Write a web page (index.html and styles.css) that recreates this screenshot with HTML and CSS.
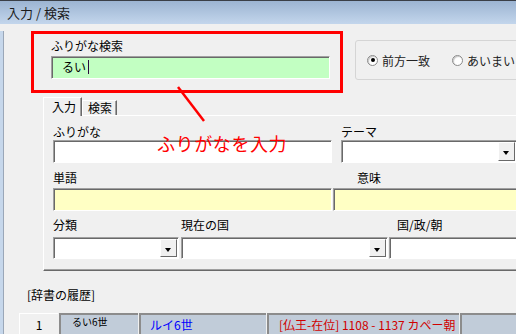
FILE: index.html
```html
<!DOCTYPE html>
<html lang="ja">
<head>
  <meta charset="UTF-8">
  <title>入力 / 検索</title>
  <link rel="stylesheet" href="styles.css">
</head>
<body>

<div class="window">
  <div class="titlebar">入力 / 検索</div>

  <div class="client">
    <div class="search-row">
      <div class="search-box">
        <div class="label">ふりがな検索</div>
        <div class="box box-green search-input">るい<span class="caret"></span></div>
      </div>
      <div class="match-group">
        <span class="radio checked"></span><span class="radio-text">前方一致</span>
        <span class="radio second"></span><span class="radio-text">あいまい</span>
      </div>
    </div>

    <div class="tabs">
      <div class="tab-strip">
        <div class="tab active">入力</div>
        <div class="tab">検索</div>
      </div>
      <div class="tab-panel">
        <div class="row row1">
          <div class="field w-furigana">
            <div class="label">ふりがな</div>
            <div class="box"></div>
          </div>
          <div class="field w-theme">
            <div class="label">テーマ</div>
            <div class="box combo"><span class="drop"></span></div>
          </div>
        </div>
        <div class="row row2">
          <div class="field w-word">
            <div class="label">単語</div>
            <div class="box box-yellow"></div>
          </div>
          <div class="field w-meaning">
            <div class="label indent24">意味</div>
            <div class="box box-yellow"></div>
          </div>
        </div>
        <div class="row row3">
          <div class="field w-kind">
            <div class="label">分類</div>
            <div class="box combo"><span class="drop"></span></div>
          </div>
          <div class="field w-country">
            <div class="label">現在の国</div>
            <div class="box combo"><span class="drop"></span></div>
          </div>
          <div class="field w-dynasty">
            <div class="label indent8">国/政/朝</div>
            <div class="box"></div>
          </div>
        </div>
      </div>
    </div>

    <div class="history-title">[辞書の履歴]</div>
    <div class="history-row">
      <div class="cell cell-no">1</div>
      <div class="cell cell-kana">るい6世</div>
      <div class="cell cell-word">ルイ6世</div>
      <div class="cell cell-note">[仏王-在位] 1108 - 1137 カペー朝</div>
      <div class="cell cell-rest"></div>
    </div>

    <!-- 注釈 -->
    <svg class="note-line" width="40" height="44" viewBox="0 0 40 44">
      <line x1="3" y1="1" x2="29" y2="35" stroke="#ff0000" stroke-width="2.5"/>
    </svg>
    <div class="note-text">ふりがなを入力</div>
  </div>
</div>

</body>
</html>
```

FILE: styles.css
```css
/* ページ全体 */
body {
  margin: 0;
  font-family: "Noto Sans CJK JP", "DejaVu Sans", sans-serif;
  font-size: 12px;
  color: #000;
  background: #f0f0f0;
  overflow: hidden;
}

.window {
  width: 516px;
  height: 334px;
  overflow: hidden;
}

/* タイトルバー */
.titlebar {
  height: 23px;
  line-height: 23px;
  border-top: 1px solid #3a3f47;
  padding-left: 7px;
  font-size: 13px;
  color: #1b1b1b;
  background: linear-gradient(#9cb4d2, #c3d6ec);
}

.client {
  position: relative;
  height: 310px;
  border-left: 3px solid #c6d7eb;
  box-shadow: inset 1px 0 0 #9aa7b8;
  background: #f0f0f0;
}

.label {
  height: 14px;
  line-height: 14px;
  white-space: nowrap;
}

.indent24 { padding-left: 24px; }
.indent8 { padding-left: 8px; }

/* 入力欄 */
.box {
  position: relative;
  height: 23px;
  box-sizing: border-box;
  border: 1px solid;
  border-color: #a0a0a0 #ffffff #ffffff #a0a0a0;
  box-shadow: inset 1px 1px 0 #696969;
  background: #fff;
}

.box-green { background: #c2ffc2; }
.box-yellow { background: #ffffc4; }

.combo .drop {
  position: absolute;
  right: 1px;
  top: 1px;
  bottom: 1px;
  width: 17px;
  box-sizing: border-box;
  border: 1px solid;
  border-color: #ffffff #696969 #696969 #ffffff;
  background: #f0f0f0;
}

.combo .drop::after {
  content: "";
  position: absolute;
  left: 4px;
  top: 8px;
  border-left: 3.5px solid transparent;
  border-right: 3.5px solid transparent;
  border-top: 4px solid #000;
}

/* ふりがな検索 */
.search-row {
  display: flex;
  align-items: flex-start;
  margin-top: 7px;
  padding-left: 28px;
}

.search-box {
  flex-shrink: 0;
  width: 312px;
  height: 62px;
  box-sizing: border-box;
  border: 3px solid #ff0000;
  padding: 5px 0 0 17px;
}

.search-input {
  width: 279px;
  margin-top: 3px;
  padding-left: 10px;
  line-height: 20px;
}

.caret {
  display: inline-block;
  width: 1px;
  height: 14px;
  margin-left: 2px;
  vertical-align: -2px;
  background: #2a0a40;
}

.match-group {
  display: flex;
  align-items: center;
  flex-shrink: 0;
  width: 200px;
  height: 40px;
  margin: 9px 0 0 12px;
  padding-left: 11px;
  box-sizing: border-box;
  border: 1px solid #d5d5d5;
  border-radius: 3px;
}

.radio {
  position: relative;
  flex-shrink: 0;
  width: 11px;
  height: 11px;
  box-sizing: border-box;
  border: 1px solid #8a8a8a;
  border-radius: 50%;
  background: #fff;
  box-shadow: inset 1px 1px 1px #c8c8c8;
}

.radio.checked::after {
  content: "";
  position: absolute;
  left: 2.5px;
  top: 2.5px;
  width: 4px;
  height: 4px;
  border-radius: 50%;
  background: #000;
}

.radio.second { margin-left: 22px; }

.radio-text {
  flex-shrink: 0;
  margin-left: 4px;
  color: #222;
  white-space: nowrap;
}

/* タブ */
.tabs {
  margin: 4px 0 0 40px;
}

.tab-strip {
  display: flex;
  align-items: flex-end;
  height: 18px;
}

.tab {
  height: 15px;
  line-height: 14px;
  padding: 0 4px 0 5px;
  box-sizing: border-box;
  border: 1px solid;
  border-bottom: none;
  border-color: #ffffff #696969 #696969 #ffffff;
  box-shadow: inset -1px 0 0 #a0a0a0;
}

.tab.active {
  position: relative;
  z-index: 1;
  width: 39px;
  height: 19px;
  margin-bottom: -1px;
  padding: 2px 0 0 8px;
  background: #f0f0f0;
}

.tab-panel {
  width: 480px;
  height: 156px;
  box-sizing: border-box;
  border-top: 1px solid #fff;
  border-left: 1px solid #fff;
  border-bottom: 1px solid #696969;
  box-shadow: inset 0 -1px 0 #a0a0a0;
  padding: 9px 0 0 9px;
}

.row {
  display: flex;
}

.field {
  flex-shrink: 0;
}

.row1 .label { margin-bottom: 1px; }
.row1 { gap: 9px; }

.row2 { gap: 1px; margin-top: 8px; }
.row2 .label { margin-bottom: 3px; }

.row3 { gap: 1px; margin-top: 7px; }
.row3 .label { margin-bottom: 5px; }
.row3 .box { height: 22px; }
.w-kind { margin-right: 1px; }

.w-furigana, .w-word { width: 279px; }
.w-theme { width: 176px; }
.w-meaning { width: 200px; }
.w-kind { width: 126px; }
.w-country { width: 207px; }
.w-dynasty { width: 150px; }

/* 辞書の履歴 */
.history-title {
  margin: 17px 0 0 24px;
  line-height: 14px;
}

.history-row {
  display: flex;
  gap: 1px;
  margin: 11px 0 0 16px;
  height: 24px;
}

.cell {
  flex-shrink: 0;
  height: 24px;
  box-sizing: border-box;
  border-top: 2px solid #8c8c8c;
  border-left: 2px solid #8c8c8c;
  background: #c1ccd9;
  line-height: 19px;
  white-space: nowrap;
}

.cell-no {
  width: 39px;
  border-top: 1px solid #ffffff;
  border-left: 1px solid #ffffff;
  background: #f0f0f0;
  text-align: center;
  line-height: 22px;
}

.cell-kana {
  width: 79px;
  padding-left: 11px;
  font-size: 10px;
  line-height: 14px;
}

.cell-word {
  width: 127px;
  padding-left: 9px;
  color: #0000ff;
}

.cell-note {
  width: 192px;
  padding-left: 10px;
  color: #d00000;
}

.cell-rest { width: 60px; }

/* 注釈 */
.note-line {
  position: absolute;
  left: 172px;
  top: 55px;
}

.note-text {
  position: absolute;
  left: 154px;
  top: 99px;
  font-size: 18px;
  letter-spacing: 0.6px;
  color: #ff0000;
}
```
